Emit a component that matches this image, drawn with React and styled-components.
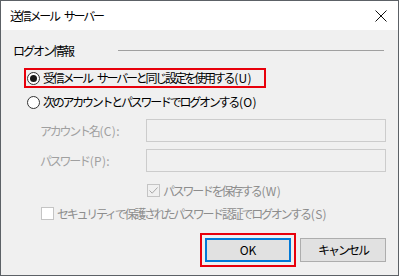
import React from 'react';
import styled, { createGlobalStyle } from 'styled-components';

const GlobalStyle = createGlobalStyle`
  html, body {
    margin: 0;
    padding: 0;
    background: #f0f0f0;
  }
  * {
    box-sizing: border-box;
  }
`;

const FONT = `"Noto Sans CJK JP", "Liberation Sans", sans-serif`;

const Window = styled.div`
  width: 399px;
  height: 276px;
  border: 1px solid #5c6166;
  background: #f0f0f0;
  display: flex;
  flex-direction: column;
  font-family: ${FONT};
  font-size: 12px;
  letter-spacing: -2.25px;
  color: #000;
  overflow: hidden;
`;

// latin parts such as "(U)" keep normal spacing
const Latin = styled.span`
  letter-spacing: 0.3px;
  margin-left: 1px;
`;

const Space = styled.span`
  display: inline-block;
  width: ${p => p.$w || 5}px;
`;

const TitleBar = styled.div`
  height: 29px;
  background: #fff;
  display: flex;
  align-items: center;
  justify-content: space-between;
  padding: 0 10px 0 9px;
  flex-shrink: 0;
`;

const Title = styled.span`
  line-height: 1;
  padding-top: 1px;
  display: flex;
  align-items: center;
`;

const CloseButton = styled.div`
  width: 12px;
  height: 12px;
  display: flex;
  margin-right: 1px;
`;

const Body = styled.div`
  flex: 1;
  display: flex;
  flex-direction: column;
  padding: 14px 12px 0 12px;
`;

const GroupHeader = styled.div`
  height: 14px;
  display: flex;
  align-items: center;
`;

const GroupTitle = styled.span`
  line-height: 1;
  letter-spacing: -2px;
`;

const GroupLine = styled.div`
  margin-left: 45px;
  margin-right: 2px;
  margin-top: -2px;
  flex: 1;
  height: 1px;
  background: #a0a0a0;
`;

const RadioRow = styled.label`
  display: flex;
  align-items: center;
  height: 16px;
  margin-top: ${p => p.$top}px;
  margin-left: 13px;
  padding-left: 1px;
  width: ${p => (p.$highlight ? '238px' : 'auto')};
  outline: ${p => (p.$highlight ? '2px solid #e8000b' : 'none')};
  line-height: 1;
  white-space: nowrap;
`;

const RadioCircle = styled.span`
  width: 13px;
  height: 13px;
  margin-right: 3px;
  border-radius: 50%;
  border: 1px solid #333;
  background: #fff;
  display: flex;
  align-items: center;
  justify-content: center;
  flex-shrink: 0;

  &::after {
    content: '';
    width: 7px;
    height: 7px;
    border-radius: 50%;
    background: ${p => (p.$checked ? '#1a1a1a' : 'transparent')};
  }
`;

const FieldRow = styled.div`
  display: flex;
  align-items: center;
  margin-top: ${p => p.$top}px;
  padding-left: 27px;
`;

const FieldLabel = styled.span`
  width: 106px;
  color: #a0a0a0;
  line-height: 1;
  white-space: nowrap;
`;

const TextBox = styled.div`
  width: 240px;
  height: 23px;
  border: 1px solid #cccccc;
  background: #f0f0f0;
`;

const CheckRow = styled.div`
  display: flex;
  align-items: center;
  height: 13px;
  margin-top: ${p => p.$top}px;
  padding-left: ${p => p.$indent}px;
  color: #8d8d8d;
  line-height: 1;
  white-space: nowrap;
`;

const CheckBox = styled.span`
  width: 13px;
  height: 13px;
  margin-right: 3px;
  border: 1px solid #c4c4c4;
  background: ${p => (p.$filled ? '#fff' : '#f0f0f0')};
  flex-shrink: 0;
  display: flex;
  align-items: center;
  justify-content: center;
`;

const ButtonBar = styled.div`
  display: flex;
  justify-content: flex-end;
  gap: 9px;
  margin-top: 18px;
`;

const Button = styled.div`
  width: 86px;
  height: 24px;
  background: #e1e1e1;
  border: ${p => (p.$default ? '2px solid #0078d7' : '1px solid #adadad')};
  display: flex;
  align-items: center;
  justify-content: center;
  line-height: 1;
  letter-spacing: ${p => (p.$latin ? '0' : '-2px')};
  outline: ${p => (p.$highlight ? '2px solid #e8000b' : 'none')};
  outline-offset: 3px;
`;

const CloseIcon = () => (
  <svg width="12" height="12" viewBox="0 0 12 12">
    <path d="M0.5 0.5 L11.5 11.5 M11.5 0.5 L0.5 11.5" stroke="#111" strokeWidth="1" fill="none" />
  </svg>
);

const CheckMark = () => (
  <svg width="11" height="11" viewBox="0 0 11 11">
    <path d="M1.5 5.5 L4.2 8.2 L9.5 2.5" stroke="#a8a8a8" strokeWidth="1" fill="none" />
  </svg>
);

export default function App() {
  return (
    <>
      <GlobalStyle />
      <Window>
        <TitleBar>
          <Title>送信メール<Space />サーバー</Title>
          <CloseButton>
            <CloseIcon />
          </CloseButton>
        </TitleBar>
        <Body>
          <GroupHeader>
            <GroupTitle>ログオン情報</GroupTitle>
            <GroupLine />
          </GroupHeader>
          <RadioRow $top={12} $highlight>
            <RadioCircle $checked />
            受信メール<Space />サーバーと同じ設定を使用する<Latin>(U)</Latin>
          </RadioRow>
          <RadioRow $top={8}>
            <RadioCircle />
            次のアカウントとパスワードでログオンする<Latin>(O)</Latin>
          </RadioRow>
          <FieldRow $top={9}>
            <FieldLabel>アカウント名<Latin>(C):</Latin></FieldLabel>
            <TextBox />
          </FieldRow>
          <FieldRow $top={7}>
            <FieldLabel>パスワード<Latin>(P):</Latin></FieldLabel>
            <TextBox />
          </FieldRow>
          <CheckRow $top={12} $indent={134}>
            <CheckBox>
              <CheckMark />
            </CheckBox>
            パスワードを保存する<Latin>(W)</Latin>
          </CheckRow>
          <CheckRow $top={10} $indent={28}>
            <CheckBox $filled />
            セキュリティで保護されたパスワード認証でログオンする<Latin>(S)</Latin>
          </CheckRow>
          <ButtonBar>
            <Button $default $highlight $latin>OK</Button>
            <Button>キャンセル</Button>
          </ButtonBar>
        </Body>
      </Window>
    </>
  );
}
